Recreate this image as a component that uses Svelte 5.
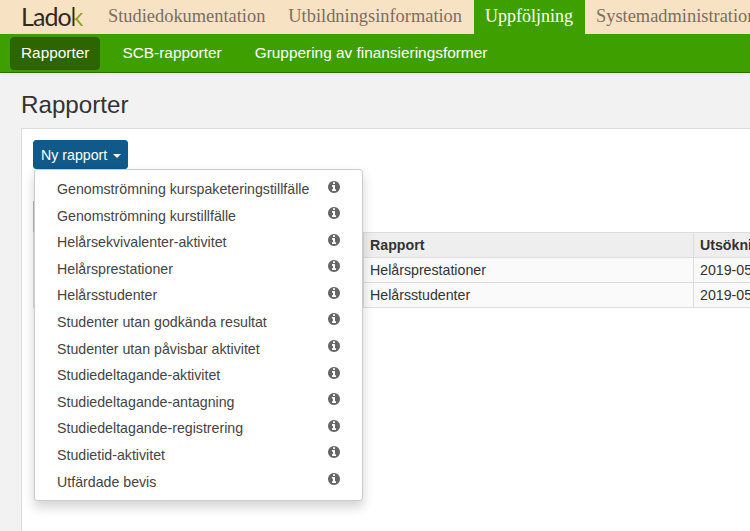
<script>
  const tabs = [
    { label: 'Studiedokumentation' },
    { label: 'Utbildningsinformation' },
    { label: 'Uppföljning', active: true },
    { label: 'Systemadministration' }
  ]
  const subnav = [
    { label: 'Rapporter', active: true },
    { label: 'SCB-rapporter' },
    { label: 'Gruppering av finansieringsformer' }
  ]
  const reports = [
    'Genomströmning kurspaketeringstillfälle',
    'Genomströmning kurstillfälle',
    'Helårsekvivalenter-aktivitet',
    'Helårsprestationer',
    'Helårsstudenter',
    'Studenter utan godkända resultat',
    'Studenter utan påvisbar aktivitet',
    'Studiedeltagande-aktivitet',
    'Studiedeltagande-antagning',
    'Studiedeltagande-registrering',
    'Studietid-aktivitet',
    'Utfärdade bevis'
  ]
  const rows = ['Helårsprestationer', 'Helårsstudenter']
</script>

<div class="page">
  <header class="topbar">
    <div class="logo">Lado<span class="logo-k">k</span></div>
    <nav class="tabs">
      {#each tabs as tab}
        <div class="tab" class:active={tab.active}>{tab.label}</div>
      {/each}
    </nav>
  </header>

  <nav class="subnav">
    {#each subnav as item}
      <div class="subitem" class:active={item.active}>{item.label}</div>
    {/each}
  </nav>

  <main class="content">
    <h1>Rapporter</h1>
    <section class="panel">
      <div class="dropdown">
        <button class="btn">Ny rapport <span class="caret"></span></button>
        <ul class="menu">
          {#each reports as report}
            <li>
              <span>{report}</span>
              <svg class="info" viewBox="128 128 1536 1536" aria-hidden="true">
                <path d="M1152 1376v-160q0-14-9-23t-23-9h-96v-512q0-14-9-23t-23-9h-320q-14 0-23 9t-9 23v160q0 14 9 23t23 9h96v320h-96q-14 0-23 9t-9 23v160q0 14 9 23t23 9h448q14 0 23-9t9-23zm-128-896v-160q0-14-9-23t-23-9h-192q-14 0-23 9t-9 23v160q0 14 9 23t23 9h192q14 0 23-9t9-23zm640 416q0 209-103 385.500t-279.500 279.500-385.500 103-385.500-103-279.500-279.500-103-385.500 103-385.500 279.500-279.500 385.500-103 385.500 103 279.500 279.500 103 385.500z" fill="#666" />
              </svg>
            </li>
          {/each}
        </ul>
        <div class="filter"></div>
      </div>

      <table>
        <thead>
          <tr><th class="c-first"></th><th class="c-name">Rapport</th><th>Utsökning</th></tr>
        </thead>
        <tbody>
          {#each rows as row}
            <tr><td></td><td>{row}</td><td>2019-05-20</td></tr>
          {/each}
        </tbody>
      </table>
    </section>
  </main>
</div>

<style>
  :global(body) {
    margin: 0;
    overflow: hidden;
  }

  .page {
    width: 750px;
    height: 531px;
    overflow: hidden;
    background: #f2f2f2;
    font-family: "Liberation Sans", Arial, sans-serif;
    font-size: 14.2px;
    color: #333;
  }

  .topbar {
    display: flex;
    height: 34px;
    background: #f7e2c3;
    padding-left: 21px;
    white-space: nowrap;
  }

  .logo {
    flex: none;
    width: 75.5px;
    color: #2f2920;
    font-family: Lato, sans-serif;
    font-size: 25px;
    font-weight: 400;
    line-height: 33px;
    letter-spacing: -0.9px;
  }

  .logo-k {
    background: linear-gradient(90deg, #2f2920 22%, #8fa02c 32%);
    -webkit-background-clip: text;
    background-clip: text;
    color: transparent;
  }

  .tabs {
    display: flex;
  }

  .tab {
    flex: none;
    padding: 6px 11.5px 0;
    font-family: "Liberation Serif", Georgia, serif;
    font-size: 18.4px;
    color: #7a6e64;
  }

  .tab.active {
    background: #3e9f00;
    color: #fff;
    font-size: 18px;
    line-height: 21px;
  }

  .subnav {
    display: flex;
    align-items: center;
    height: 39px;
    padding-left: 10px;
    background: #3e9f00;
    border-bottom: 1px solid #2f6d0a;
    box-sizing: border-box;
    box-shadow: 0 1px 3px rgba(0, 0, 0, 0.07);
    font-size: 15.4px;
  }

  .subitem {
    padding: 6px 10px 7px;
    border: 1px solid transparent;
    border-radius: 4px;
    color: #fff;
    margin-left: 11px;
  }

  .subitem.active {
    margin-left: 0;
    background: #2d6500;
    border-color: #2a5f00;
  }

  .content {
    padding: 19px 0 0 21px;
  }

  h1 {
    margin: 0 0 10px;
    font-size: 24.2px;
    font-weight: 400;
    line-height: 26px;
    color: #333;
  }

  .panel {
    height: 420px;
    padding: 11px 0 0 11px;
    background: #fff;
    border: 1px solid #ddd;
    border-right: 0;
  }

  .dropdown {
    position: relative;
  }

  .btn {
    display: block;
    height: 29px;
    padding: 0 6px 0 7px;
    border: 1px solid #0f5a8a;
    border-radius: 3px;
    background: #0f5a8a;
    color: #fff;
    font: inherit;
  }

  .caret {
    display: inline-block;
    width: 0;
    height: 0;
    margin-left: 2px;
    vertical-align: middle;
    border-top: 4px solid #fff;
    border-left: 4px solid transparent;
    border-right: 4px solid transparent;
  }

  .menu {
    position: absolute;
    z-index: 2;
    top: 29px;
    left: 1px;
    width: 329px;
    box-sizing: border-box;
    margin: 0;
    padding: 6px 0 5px;
    list-style: none;
    background: #fff;
    border: 1px solid #ccc;
    border-radius: 3px;
    box-shadow: 0 6px 12px rgba(0, 0, 0, 0.18);
  }

  .menu li {
    display: flex;
    justify-content: space-between;
    height: 26.6px;
    padding: 0 22px;
    line-height: 27px;
    color: #444;
  }

  .info {
    width: 12px;
    height: 12px;
    margin-top: 4.5px;
  }

  /* mostly hidden behind the open menu */
  .filter {
    width: 60px;
    height: 31px;
    margin-top: 32px;
    border-left: 1px solid #bbb;
    box-sizing: border-box;
  }

  table {
    width: 900px;
    border-collapse: collapse;
    table-layout: fixed;
  }

  th, td {
    height: 25px;
    padding: 0 6px;
    border: 1px solid #ddd;
    text-align: left;
    white-space: nowrap;
    box-sizing: border-box;
  }

  th {
    background: #eee;
    font-weight: 700;
  }

  td {
    background: #fafafa;
  }

  .c-first {
    width: 330px;
  }

  .c-name {
    width: 330px;
  }
</style>
